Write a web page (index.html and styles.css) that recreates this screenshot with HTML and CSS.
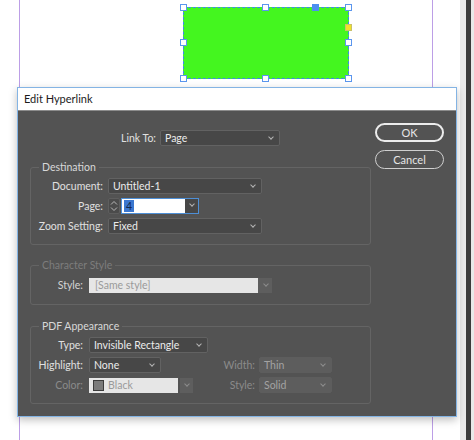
FILE: index.html
```html
<!DOCTYPE html>
<html lang="en">
<head>
  <meta charset="UTF-8">
  <meta name="viewport" content="width=device-width, initial-scale=1.0">
  <title>Edit Hyperlink</title>
  <link rel="stylesheet" href="styles.css">
</head>
<body>

<div class="screen">
  <div class="pasteboard">
    <div class="page">
      <div class="frame">
        <span class="handle h-tl"></span>
        <span class="handle h-tc"></span>
        <span class="handle h-tr"></span>
        <span class="handle h-ml"></span>
        <span class="handle h-mr"></span>
        <span class="handle h-bl"></span>
        <span class="handle h-bc"></span>
        <span class="handle h-br"></span>
        <span class="anchor"></span>
        <span class="out-port"></span>
      </div>
    </div>

    <div class="dialog">
      <div class="dialog-title">Edit Hyperlink</div>
      <div class="dialog-body">
        <div class="main">
          <div class="row">
            <span class="lbl lbl-link">Link To:</span>
            <div class="dd w-link">Page</div>
          </div>

          <fieldset class="group group-dest">
            <legend>Destination</legend>
            <div class="row">
              <span class="lbl lbl-dest">Document:</span>
              <div class="dd w-doc">Untitled-1</div>
            </div>
            <div class="row">
              <span class="lbl lbl-dest">Page:</span>
              <div class="spinner">
                <svg viewBox="0 0 8 12" width="8" height="12"><path d="M1 4.5 L4 1.5 L7 4.5 M1 7.5 L4 10.5 L7 7.5" fill="none" stroke="#b8b8b8" stroke-width="1"/></svg>
              </div>
              <div class="combo">
                <div class="combo-field"><span class="sel">4</span></div>
                <div class="combo-arrow"></div>
              </div>
            </div>
            <div class="row">
              <span class="lbl lbl-dest">Zoom Setting:</span>
              <div class="dd w-doc">Fixed</div>
            </div>
          </fieldset>

          <fieldset class="group group-char off">
            <legend>Character Style</legend>
            <div class="row">
              <span class="lbl lbl-pdf">Style:</span>
              <div class="field-off w-style">[Same style]</div>
              <div class="arrow-off"></div>
            </div>
          </fieldset>

          <fieldset class="group group-pdf">
            <legend>PDF Appearance</legend>
            <div class="row">
              <span class="lbl lbl-pdf">Type:</span>
              <div class="dd w-type">Invisible Rectangle</div>
            </div>
            <div class="row">
              <span class="lbl lbl-pdf">Highlight:</span>
              <div class="dd w-hl">None</div>
              <span class="lbl dim lbl-width">Width:</span>
              <div class="dd dd-off w-small">Thin</div>
            </div>
            <div class="row">
              <span class="lbl dim lbl-pdf">Color:</span>
              <div class="field-off w-color"><span class="swatch"></span>Black</div>
              <div class="arrow-off arrow-color"></div>
              <span class="lbl dim lbl-style">Style:</span>
              <div class="dd dd-off w-small">Solid</div>
            </div>
          </fieldset>
        </div>

        <div class="side">
          <button class="btn btn-default">OK</button>
          <button class="btn">Cancel</button>
        </div>
      </div>
    </div>
  </div>

  <div class="edge"><span class="edge-dark"></span></div>
</div>

</body>
</html>
```

FILE: styles.css
```css
body {
  margin: 0;
  font-family: Lato, "Open Sans", sans-serif;
  font-size: 10.5px;
  background: #fff;
  overflow: hidden;
}
.screen {
  display: flex;
  width: 474px;
  height: 440px;
  overflow: hidden;
}
.pasteboard {
  position: relative;
  width: 460px;
  background: #fff;
}
.page {
  margin-left: 19px;
  width: 414px;
  height: 440px;
  box-sizing: border-box;
  border-left: 1px solid #bc9ee6;
  border-right: 1px solid #bc9ee6;
  padding-top: 7px;
}

/* selected rectangle on the page */
.frame {
  position: relative;
  margin-left: 163px;
  width: 166px;
  height: 72px;
  box-sizing: border-box;
  background: #44f61f;
  border: 1px dashed #3f86f0;
}
.handle {
  position: absolute;
  width: 7px;
  height: 7px;
  box-sizing: border-box;
  background: #fff;
  border: 1px solid #5b96ee;
}
.h-tl { top: -4px; left: -4px; }
.h-tc { top: -4px; left: 78px; }
.h-tr { top: -4px; right: -4px; }
.h-ml { top: 31px; left: -4px; }
.h-mr { top: 31px; right: -4px; }
.h-bl { bottom: -4px; left: -4px; }
.h-bc { bottom: -4px; left: 78px; }
.h-br { bottom: -4px; right: -4px; }
.anchor {
  position: absolute;
  top: -4px;
  left: 128px;
  width: 7px;
  height: 7px;
  background: #4d8ff0;
}
.out-port {
  position: absolute;
  top: 16px;
  right: -4px;
  width: 7px;
  height: 7px;
  box-sizing: border-box;
  background: #f1e22a;
  border: 1px solid #c9c16a;
}

.edge {
  width: 14px;
  background: #e9e9e9;
  display: flex;
  justify-content: flex-end;
}
.edge-dark {
  width: 5px;
  margin-right: 3px;
  background: #3b3b3b;
}

/* dialog */
.dialog {
  position: absolute;
  left: 17px;
  top: 87px;
  width: 440px;
  height: 330px;
  box-sizing: border-box;
  border: 1px solid #84b4e4;
  box-shadow: 0 3px 8px rgba(0,0,0,0.25);
  display: flex;
  flex-direction: column;
}
.dialog-title {
  height: 23px;
  line-height: 22px;
  box-sizing: border-box;
  padding-left: 6px;
  background: #fff;
  border-bottom: 1px solid #8c8c8c;
  color: #1c1c1c;
  font-size: 11px;
}
.dialog-body {
  flex: 1;
  display: flex;
  background: #535353;
  padding: 12px 0 0 12px;
  color: #dcdcdc;
}
.main {
  width: 341px;
  padding-top: 7px;
}
.side {
  margin-left: 4px;
  width: 69px;
  display: flex;
  flex-direction: column;
  gap: 8px;
}

.row {
  display: flex;
  align-items: center;
  height: 16px;
}
.row + .row {
  margin-top: 4px;
}
.lbl {
  text-align: right;
  white-space: nowrap;
  color: #e0e0e0;
}
.lbl.dim { color: #8b8b8b; }
.lbl-link { width: 126px; margin-right: 4px; }
.lbl-dest { width: 72px; margin-right: 5px; }
.lbl-pdf { width: 52px; margin-right: 6px; }
.lbl-width { width: 94px; margin-right: 4px; }
.lbl-style { width: 62px; margin-right: 4px; }

/* dropdowns */
.dd {
  position: relative;
  height: 16px;
  line-height: 15px;
  box-sizing: border-box;
  padding-left: 4px;
  background: #474747;
  border: 1px solid #626262;
  border-radius: 2px;
  color: #ececec;
  white-space: nowrap;
}
.dd::after,
.combo-arrow::after,
.arrow-off::after {
  content: "";
  position: absolute;
  top: 4px;
  right: 6px;
  width: 3px;
  height: 3px;
  border-right: 1px solid #b4b4b4;
  border-bottom: 1px solid #b4b4b4;
  transform: rotate(45deg);
}
.dd-off {
  background: #5d5d5d;
  border-color: #5d5d5d;
  color: #a3a3a3;
}
.dd-off::after { border-color: #8e8e8e; }
.w-link { width: 120px; }
.w-doc { width: 154px; }
.w-type { width: 119px; }
.w-hl { width: 72px; }
.w-small { width: 73px; }

.spinner {
  width: 12px;
  height: 16px;
  box-sizing: border-box;
  border: 1px solid #5e5e5e;
  border-radius: 2px;
  background: #4b4b4b;
  display: flex;
  align-items: center;
  justify-content: center;
  margin-right: 1px;
}
.combo {
  display: flex;
  height: 16px;
  box-sizing: border-box;
  border: 1px solid #4e8fd6;
}
.combo-field {
  width: 63px;
  background: #fff;
  padding: 1px 0 0 2px;
  box-sizing: border-box;
  display: flex;
}
.sel {
  height: 12px;
  line-height: 12px;
  background: #3b77cf;
  color: #14294b;
  padding: 0 2px;
}
.combo-arrow {
  position: relative;
  width: 13px;
  background: #474747;
}
.combo-arrow::after { right: 4px; top: 3px; }

.field-off {
  height: 15px;
  line-height: 15px;
  box-sizing: border-box;
  padding-left: 6px;
  background: #e6e6e6;
  color: #9a9a9a;
  white-space: nowrap;
  display: flex;
  align-items: center;
}
.w-style { width: 169px; }
.w-color { width: 89px; padding-left: 4px; }
.arrow-off {
  position: relative;
  width: 14px;
  height: 15px;
  background: #5e5e5e;
}
.arrow-off::after { right: 4px; border-color: #8c8c8c; }
.arrow-color { width: 13px; margin-left: 2px; }
.swatch {
  width: 9px;
  height: 9px;
  margin-right: 4px;
  background: #7b7b7b;
  border: 1px solid #3c3c3c;
}

/* group boxes */
.group {
  margin: 14px 0 0 0;
  padding: 4px 0 10px 0;
  border: 1px solid #646464;
  border-radius: 3px;
  min-width: 0;
}
.group legend {
  margin-left: 8px;
  padding: 0 3px;
  line-height: 14px;
  color: #d8d8d8;
}
.group-char {
  margin-top: 13px;
  padding: 5px 0 11px 0;
}
.group-char legend { color: #7d7d7d; }
.group-char .lbl { color: #d4d4d4; }

/* buttons */
.btn {
  height: 19px;
  padding: 0;
  border: 1px solid #cfcfcf;
  border-radius: 10px;
  background: #535353;
  color: #e6e6e6;
  font-family: inherit;
  font-size: 11px;
}
.btn-default {
  border: 2px solid #ececec;
}
```
